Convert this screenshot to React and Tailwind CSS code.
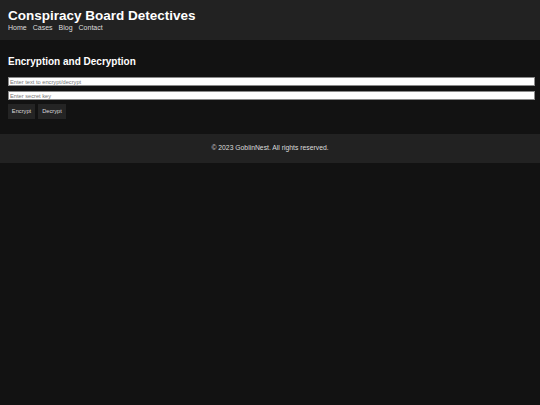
import React from 'react';

const App = () => {
  return (
    <div className="min-h-[405px] bg-[#121212] font-['Liberation_Sans',Arial,sans-serif] text-white">
      <header className="bg-[#222222] px-2 pt-2 pb-2 h-[40px]">
        <h1 className="text-[13.5px] leading-[16px] font-bold">Conspiracy Board Detectives</h1>
        <nav className="flex gap-[6px] text-[7px] leading-[8px] text-[#dddddd]">
          <a href="#">Home</a>
          <a href="#">Cases</a>
          <a href="#">Blog</a>
          <a href="#">Contact</a>
        </nav>
      </header>

      <main className="px-2 pt-4 pb-[15px]">
        <h2 className="text-[10px] leading-[12px] font-bold mb-[9px]">Encryption and Decryption</h2>
        <div className="flex flex-col gap-[5px]">
          <input
            type="text"
            placeholder="Enter text to encrypt/decrypt"
            className="h-[9px] w-[527px] bg-white border border-[#8a8a8a] px-[1px] text-[5.7px] text-black placeholder:text-[#777777] outline-none"
          />
          <input
            type="text"
            placeholder="Enter secret key"
            className="h-[9px] w-[527px] bg-white border border-[#8a8a8a] px-[1px] text-[5.7px] text-black placeholder:text-[#777777] outline-none"
          />
        </div>
        <div className="flex gap-[3px] mt-[4px]">
          <button className="h-[15px] w-[27px] bg-[#242424] text-[5.7px] text-[#dddddd]">Encrypt</button>
          <button className="h-[15px] w-[28px] bg-[#242424] text-[5.7px] text-[#dddddd]">Decrypt</button>
        </div>
      </main>

      <footer className="bg-[#222222] h-[29px] flex items-center justify-center text-[6.8px] text-[#dddddd]">
        © 2023 GoblinNest. All rights reserved.
      </footer>
    </div>
  );
};

export default App;
